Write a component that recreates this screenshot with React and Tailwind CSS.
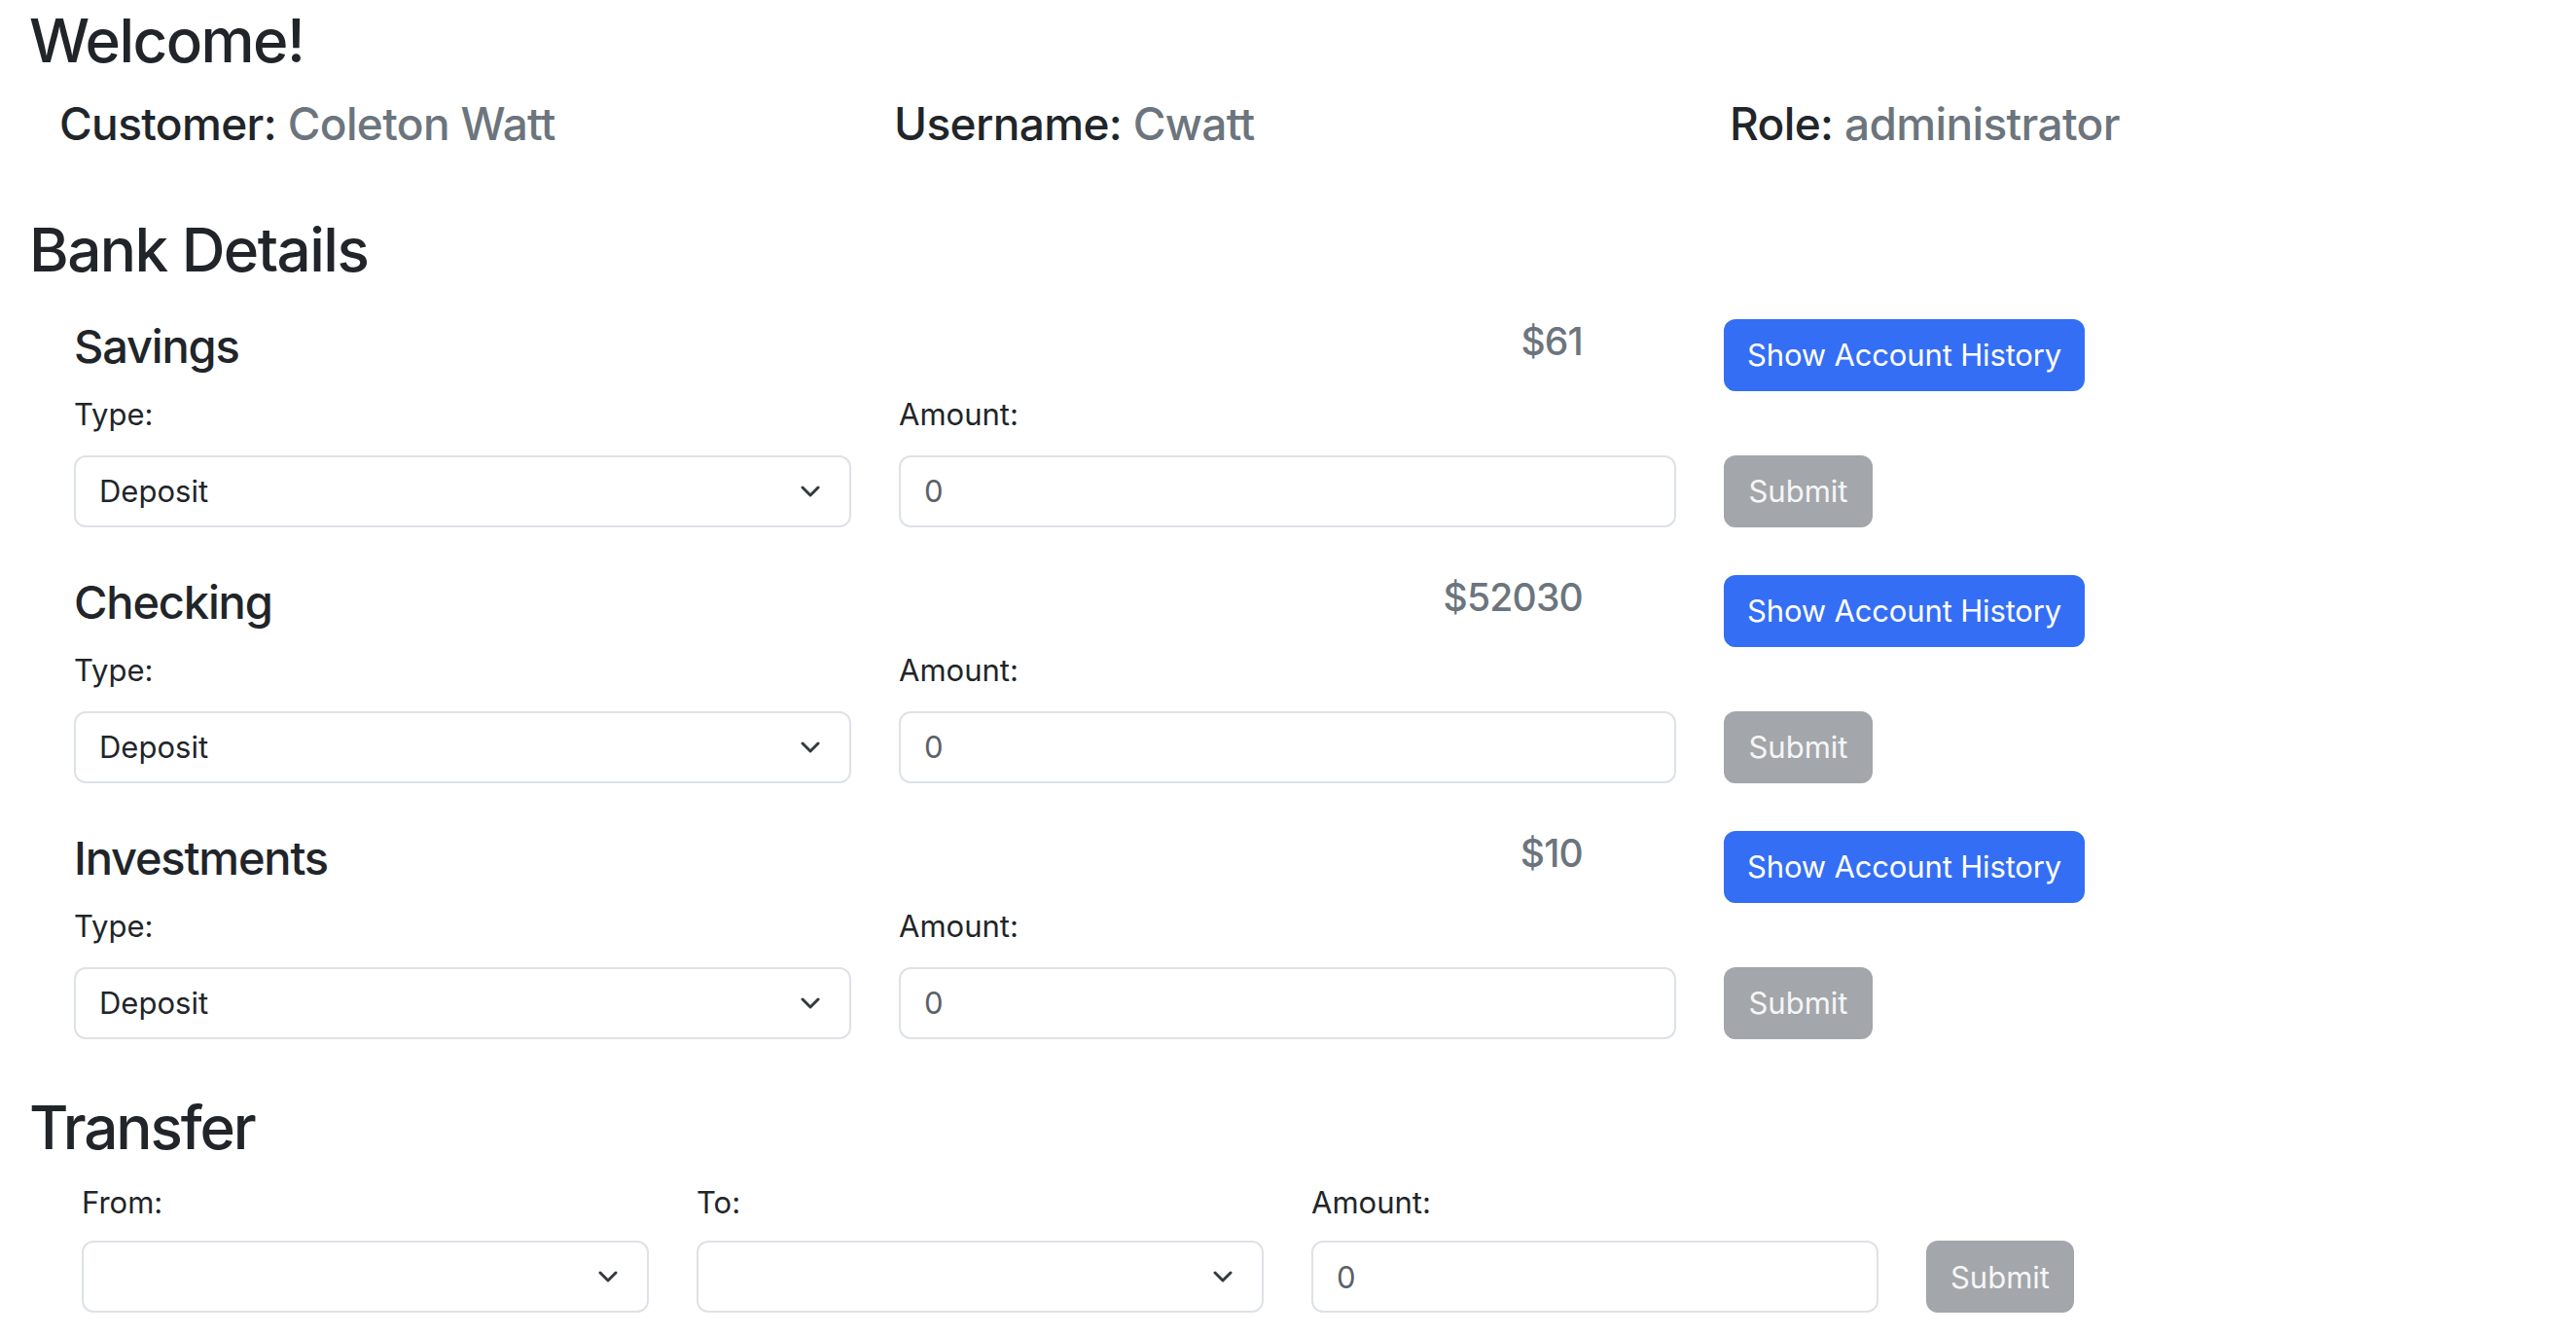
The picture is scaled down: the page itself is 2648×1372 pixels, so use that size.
const accounts = [
  { name: "Savings", balance: "$61" },
  { name: "Checking", balance: "$52030" },
  { name: "Investments", balance: "$10" },
];

function Chevron() {
  return (
    <svg width="20" height="12" viewBox="0 0 20 12" fill="none" className="shrink-0">
      <path
        d="M2 2l8 8 8-8"
        stroke="#343a40"
        strokeWidth="3"
        strokeLinecap="round"
        strokeLinejoin="round"
      />
    </svg>
  );
}

function SelectBox({ value }) {
  return (
    <div className="flex h-[74px] items-center justify-between rounded-[12px] border-2 border-[#dee2e6] bg-white pl-[24px] pr-[30px] text-[31px] leading-[47px] text-[#212529]">
      <span>{value}</span>
      <Chevron />
    </div>
  );
}

function AmountInput() {
  return (
    <input
      type="text"
      defaultValue="0"
      className="h-[74px] w-full rounded-[12px] border-2 border-[#dee2e6] bg-white px-[24px] text-[31px] leading-[47px] text-[#5c6166] outline-none"
    />
  );
}

function SubmitButton({ width }) {
  return (
    <button
      className={`h-[74px] ${width} rounded-[12px] bg-[#a3a6aa] text-[31px] leading-[47px] text-white/90`}
    >
      Submit
    </button>
  );
}

function AccountBlock({ name, balance }) {
  return (
    <div className="grid grid-cols-[799px_799px_1fr] gap-x-[49px] pl-[46px] pb-[49px]">
      <h4 className="text-[47px] font-medium leading-[1.2] tracking-[-0.025em]">{name}</h4>
      <h5 className="pr-[96px] text-right text-[39px] font-medium leading-[1.2] tracking-[-0.02em] text-[#6c757d]">
        {balance}
      </h5>
      <div>
        <button className="h-[74px] w-[371px] rounded-[12px] bg-[#346ef5] text-[31px] leading-[47px] tracking-[-0.005em] text-white">
          Show Account History
        </button>
      </div>

      <label className="pb-[19px] text-[31px] leading-[47px]">Type:</label>
      <label className="pb-[19px] text-[31px] leading-[47px]">Amount:</label>
      <div />

      <SelectBox value="Deposit" />
      <AmountInput />
      <div>
        <SubmitButton width="w-[153px]" />
      </div>
    </div>
  );
}

export default function App() {
  return (
    <div className="min-h-screen bg-white font-['Inter',sans-serif] text-[#212529]">
      <div className="pl-[30px] pr-[36px]">
        <h2 className="pt-[5px] mb-[20px] text-[62px] font-medium leading-[1.2] tracking-[-0.025em]">
          Welcome!
        </h2>

        <div className="grid grid-cols-[858px_859px_1fr] pl-[31px] tracking-[-0.04em]">
          <h4 className="text-[46px] font-medium leading-[56px]">
            Customer: <span className="text-[#6c757d]">Coleton Watt</span>
          </h4>
          <h4 className="text-[46px] font-medium leading-[56px]">
            Username: <span className="text-[#6c757d]">Cwatt</span>
          </h4>
          <h4 className="text-[46px] font-medium leading-[56px]">
            Role: <span className="text-[#6c757d]">administrator</span>
          </h4>
        </div>

        <h2 className="mt-[65px] mb-[33px] text-[62px] font-medium leading-[1.2] tracking-[-0.025em]">
          Bank Details
        </h2>

        {accounts.map((a) => (
          <AccountBlock key={a.name} name={a.name} balance={a.balance} />
        ))}

        <h2 className="mt-[5px] mb-[16px] text-[62px] font-medium leading-[1.2] tracking-[-0.035em]">
          Transfer
        </h2>

        <div className="grid grid-cols-[583px_583px_583px_1fr] gap-x-[49px] pl-[54px]">
          <label className="pb-[16px] text-[31px] leading-[47px]">From:</label>
          <label className="pb-[16px] text-[31px] leading-[47px]">To:</label>
          <label className="pb-[16px] text-[31px] leading-[47px]">Amount:</label>
          <div />

          <SelectBox value="" />
          <SelectBox value="" />
          <AmountInput />
          <div>
            <SubmitButton width="w-[152px]" />
          </div>
        </div>
      </div>
    </div>
  );
}
